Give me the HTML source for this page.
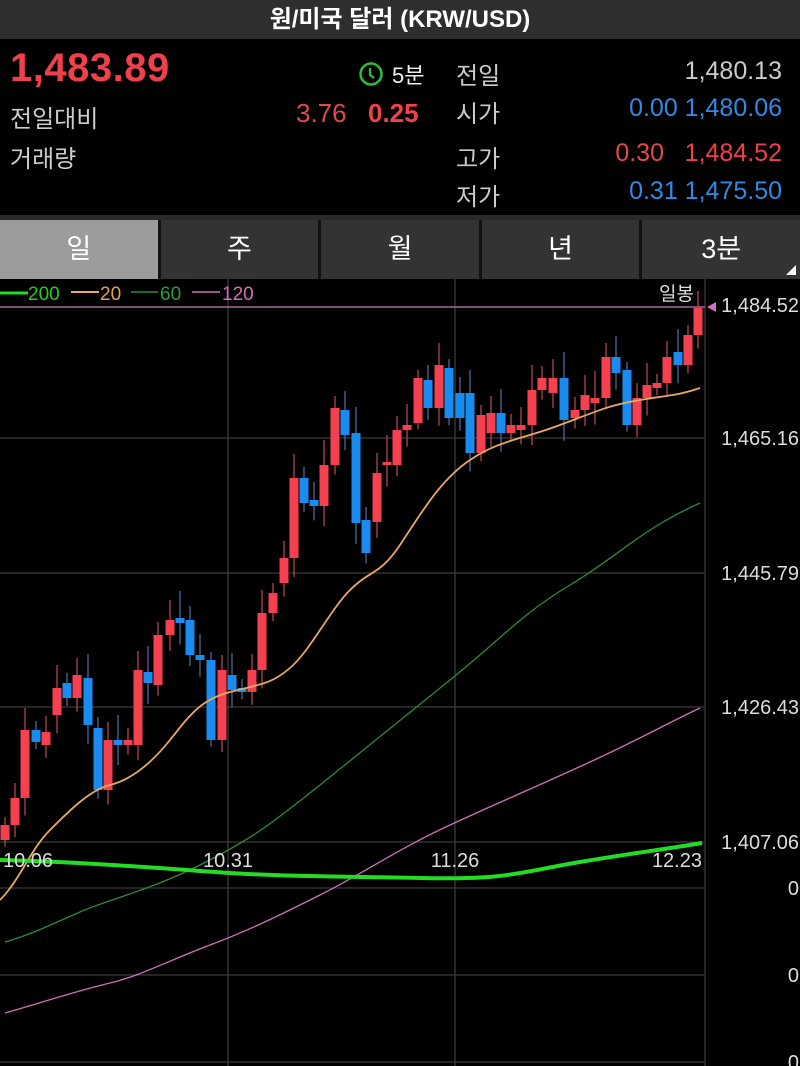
<!DOCTYPE html>
<html><head><meta charset="utf-8"><style>
*{margin:0;padding:0;box-sizing:border-box}
body{width:800px;height:1066px;background:#000;overflow:hidden;font-family:"Liberation Sans","Noto Sans CJK KR",sans-serif;color:#ddd;position:relative}
.a{position:absolute;white-space:nowrap}
</style></head><body>
<div class="a" style="left:0;top:0;width:800px;height:39px;background:#2e2e2e;text-align:center;font-size:24px;font-weight:bold;color:#fff;line-height:40px">원/미국 달러 (KRW/USD)</div>
<div class="a" style="left:10px;top:46px;font-size:40px;font-weight:bold;color:#f0404a;letter-spacing:0.5px">1,483.89</div>
<div class="a" style="left:10px;top:99px;font-size:24px;color:#ccc">전일대비</div>
<div class="a" style="left:10px;top:139px;font-size:24px;color:#ccc">거래량</div>
<svg class="a" style="left:358px;top:61px" width="26" height="26"><circle cx="13" cy="13" r="10.5" fill="none" stroke="#2ebd3a" stroke-width="2.5"/><path d="M12 7v7l4 3" fill="none" stroke="#2ebd3a" stroke-width="2.2"/></svg>
<div class="a" style="left:392px;top:58px;font-size:22px;color:#eee">5분</div>
<div class="a" style="left:296px;top:98px;font-size:26px;color:#e0484e">3.76</div>
<div class="a" style="left:368px;top:98px;font-size:26px;font-weight:bold;color:#f0404a">0.25</div>
<div class="a" style="left:456px;top:56px;font-size:24px;color:#ccc">전일</div>
<div class="a" style="left:456px;top:94px;font-size:24px;color:#ccc">시가</div>
<div class="a" style="left:456px;top:139px;font-size:24px;color:#ccc">고가</div>
<div class="a" style="left:456px;top:177px;font-size:24px;color:#ccc">저가</div>
<div class="a" style="right:18px;top:57px;font-size:25px;color:#ccc">1,480.13</div>
<div class="a" style="right:18px;top:94px;font-size:25px;color:#2f8ae6">0.00 1,480.06</div>
<div class="a" style="right:136px;top:139px;font-size:25px;color:#e0484e">0.30</div>
<div class="a" style="right:18px;top:139px;font-size:25px;color:#f0404a">1,484.52</div>
<div class="a" style="right:18px;top:177px;font-size:25px;color:#2f8ae6">0.31 1,475.50</div>
<div class="a" style="left:0;top:215px;width:800px;height:5px;background:#2a2a2a"></div>
<div class="a" style="left:0;top:220px;width:800px;height:59px;display:flex;gap:3px;background:#111">
<div style="flex:1;background:#9c9c9c;color:#fff;text-align:center;font-size:27px;line-height:59px">일</div>
<div style="flex:1;background:#333;color:#fff;text-align:center;font-size:27px;line-height:59px">주</div>
<div style="flex:1;background:#333;color:#fff;text-align:center;font-size:27px;line-height:59px">월</div>
<div style="flex:1;background:#333;color:#fff;text-align:center;font-size:27px;line-height:59px">년</div>
<div style="flex:1;background:#333;color:#fff;text-align:center;font-size:27px;line-height:59px;position:relative">3분<span style="position:absolute;right:4px;bottom:4px;width:0;height:0;border-left:10px solid transparent;border-bottom:10px solid #fff"></span></div>
</div>
<svg id="ch" class="a" style="left:0;top:279px" width="800" height="787" viewBox="0 279 800 787">
<g stroke="#3a3a3a" stroke-width="1.3">
<line x1="0" y1="438" x2="705" y2="438"/><line x1="0" y1="573" x2="705" y2="573"/><line x1="0" y1="707" x2="705" y2="707"/><line x1="0" y1="842" x2="705" y2="842"/><line x1="0" y1="888" x2="705" y2="888"/><line x1="0" y1="975" x2="705" y2="975"/><line x1="0" y1="1062" x2="705" y2="1062"/>
<line x1="228" y1="279" x2="228" y2="1066"/><line x1="455" y1="279" x2="455" y2="1066"/><line x1="705" y1="279" x2="705" y2="1066"/>
</g>
<line x1="0" y1="307" x2="705" y2="307" stroke="#a06a9a" stroke-width="1.5"/>
<polygon points="707,307 716,302 716,312" fill="#d070c0"/>
<g id="cd"></g>
<path d="M0,900 C20,880 30,850 50,830 S90,790 110,785 S150,765 170,740 S200,700 230,692 S270,685 290,668 S330,610 350,590 S380,575 400,545 S440,480 470,460 S520,440 560,425 S610,405 640,400 S680,395 700,388" fill="none" stroke="#e8a860" stroke-width="1.8"/>
<path d="M5,942 C30,935 50,925 80,912 S150,890 200,865 S270,825 320,785 S400,720 450,680 S520,615 570,585 S640,530 700,503" fill="none" stroke="#2e8a3a" stroke-width="1.3"/>
<path d="M5,1013 C40,1003 80,990 110,983 S170,960 210,945 S280,915 320,895 S400,848 450,825 S540,785 590,762 S670,722 700,708" fill="none" stroke="#d070b8" stroke-width="1.3"/>
<path d="M0,860 C50,861 120,865 200,871 S330,876 420,878 S520,872 580,862 S660,850 702,843" fill="none" stroke="#22dd22" stroke-width="4"/>
<g fill="#ddd" font-family="Liberation Sans,sans-serif" font-size="20">
<text x="799" y="312" text-anchor="end">1,484.52</text>
<text x="799" y="445" text-anchor="end">1,465.16</text>
<text x="799" y="580" text-anchor="end">1,445.79</text>
<text x="799" y="714" text-anchor="end">1,426.43</text>
<text x="799" y="849" text-anchor="end">1,407.06</text>
<text x="799" y="895" text-anchor="end">0</text>
<text x="799" y="982" text-anchor="end">0</text>
<text x="799" y="1069" text-anchor="end">0</text>
<text x="28" y="867" text-anchor="middle">10.06</text>
<text x="228" y="867" text-anchor="middle">10.31</text>
<text x="455" y="867" text-anchor="middle">11.26</text>
<text x="702" y="867" text-anchor="end">12.23</text>
<text x="694" y="300" text-anchor="end" font-size="19" font-family="Liberation Sans,Noto Sans CJK KR,sans-serif">일봉</text>
</g>
<g font-family="Liberation Sans,sans-serif" font-size="19">
<line x1="0" y1="293" x2="28" y2="293" stroke="#22dd22" stroke-width="3"/><text x="28" y="300" fill="#22cc22">200</text>
<line x1="71" y1="292" x2="99" y2="292" stroke="#e8a860" stroke-width="2"/><text x="100" y="300" fill="#e0a060">20</text>
<line x1="131" y1="292" x2="158" y2="292" stroke="#2e8a3a" stroke-width="1.5"/><text x="160" y="300" fill="#2e9a3a">60</text>
<line x1="192" y1="292" x2="220" y2="292" stroke="#d070b8" stroke-width="1.5"/><text x="222" y="300" fill="#d070b8">120</text>
</g>
</svg>
<script>
var d=[[5,'r',825,840],[15,'r',798,825],[25,'r',730,798],[36,'b',730,742],[46,'r',732,745],[57,'r',688,715],[67,'b',683,698],[77,'r',675,698],[88,'b',678,725],[98,'b',728,790],[108,'r',740,790],[118,'b',740,745],[128,'r',740,745],[138,'r',670,745],[148,'b',672,683],[158,'r',635,685],[170,'r',620,635],[180,'b',618,623],[190,'b',620,655],[200,'b',655,660],[211,'b',660,740],[222,'r',670,740],[232,'b',675,690],[242,'b',688,692],[252,'r',670,692],[262,'r',613,670],[273,'r',593,613],[284,'r',558,583],[294,'r',478,558],[304,'b',478,503],[314,'b',500,506],[324,'r',465,506],[335,'r',408,465],[345,'b',410,435],[356,'b',433,523],[366,'b',520,553],[377,'r',473,522],[387,'r',462,465],[397,'r',430,465],[407,'r',425,430],[418,'r',378,423],[428,'b',380,408],[439,'r',365,408],[449,'b',368,418],[460,'b',393,418],[470,'b',393,453],[481,'r',415,453],[491,'r',413,433],[501,'b',413,433],[511,'r',425,433],[521,'r',425,430],[532,'r',390,425],[542,'r',378,390],[553,'r',378,393],[564,'b',378,420],[575,'r',410,418],[585,'r',395,410],[595,'r',398,403],[606,'r',357,398],[616,'b',357,373],[627,'b',370,425],[637,'r',398,425],[647,'r',385,398],[657,'r',383,388],[667,'r',357,383],[678,'b',352,365],[688,'r',335,365],[698,'r',308,335]];
var s='';d.forEach(function(c,i){var col=c[1]=='r'?'#f5404f':'#1a8cf0';var w=col=='#f5404f'?'#b04850':'#4a6a9a';var h=Math.max(c[3]-c[2],3);var ext=8+(i*7%20);s+='<line x1="'+c[0]+'" x2="'+c[0]+'" y1="'+(c[2]-ext)+'" y2="'+(c[2]+h+ext*0.8)+'" stroke="'+w+'" stroke-width="1.3"/><rect x="'+(c[0]-4.5)+'" y="'+c[2]+'" width="9" height="'+h+'" fill="'+col+'"/>';});
document.getElementById('cd').innerHTML=s;
</script>
</body></html>
